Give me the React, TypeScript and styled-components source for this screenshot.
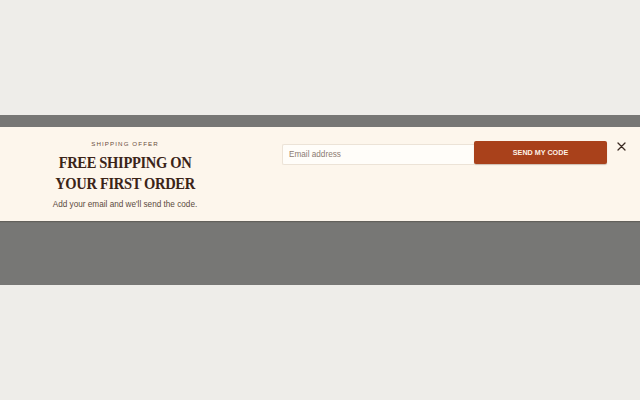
import React, { useState } from 'react'
import styled, { createGlobalStyle } from 'styled-components'

const GlobalStyle = createGlobalStyle`
    html, body {
        margin: 0;
        padding: 0;
        background: #eeede9;
    }
    * {
        box-sizing: border-box;
    }
`

const App = () => {
    const [email, setEmail] = useState('')

    return (
        <>
            <GlobalStyle />
            <Page>
                <Backdrop>
                    <Banner>
                        <Intro>
                            <Eyebrow>Shipping offer</Eyebrow>
                            <Heading>
                                Free shipping on
                                <br />
                                your first order
                            </Heading>
                            <Lead>Add your email and we'll send the code.</Lead>
                        </Intro>
                        <SignupForm onSubmit={(e) => e.preventDefault()}>
                            <EmailInput
                                type="email"
                                placeholder="Email address"
                                value={email}
                                onChange={(e) => setEmail(e.target.value)}
                            />
                            <SubmitButton type="submit">Send my code</SubmitButton>
                        </SignupForm>
                        <CloseButton aria-label="Close">
                            <svg width="9" height="9" viewBox="0 0 9 9">
                                <path
                                    d="M1 1L8 8M8 1L1 8"
                                    stroke="#3a2a22"
                                    strokeWidth="1.3"
                                    strokeLinecap="round"
                                />
                            </svg>
                        </CloseButton>
                    </Banner>
                </Backdrop>
            </Page>
        </>
    )
}

export default App

const Page = styled.div`
    width: 640px;
    height: 400px;
    padding-top: 115px;
    background: #eeede9;
`

const Backdrop = styled.div`
    height: 170px;
    padding-top: 12px;
    background: #777775;
`

const Banner = styled.div`
    display: flex;
    align-items: flex-start;
    height: 94px;
    background: #fdf6ec;
    box-shadow: 0 1px 1px rgba(40, 30, 20, 0.25);
`

const Intro = styled.div`
    width: 250px;
    padding-top: 13px;
    text-align: center;
`

const Eyebrow = styled.div`
    font-family: 'Liberation Sans', Arial, sans-serif;
    font-size: 6.2px;
    line-height: 8px;
    letter-spacing: 1.1px;
    text-transform: uppercase;
    color: #6a4c3c;
`

const Heading = styled.h2`
    margin: 4px 0 0;
    font-family: 'Liberation Serif', 'Times New Roman', serif;
    font-weight: 700;
    font-size: 17.5px;
    line-height: 21px;
    letter-spacing: -0.4px;
    text-transform: uppercase;
    color: #3b2418;
    transform: scaleX(0.83);
`

const Lead = styled.p`
    margin: 5px 0 0;
    font-family: 'Liberation Sans', Arial, sans-serif;
    font-size: 8.2px;
    line-height: 11px;
    color: #5b4a40;
`

const SignupForm = styled.form`
    display: flex;
    align-items: flex-start;
    width: 325px;
    margin: 0 0 0 32px;
    padding-top: 14px;
`

const EmailInput = styled.input`
    width: 192px;
    height: 21px;
    margin-top: 3px;
    padding: 0 6px;
    border: 1px solid #ece3d7;
    border-right: none;
    border-radius: 2px 0 0 2px;
    background: #fffdf9;
    font-family: 'Liberation Sans', Arial, sans-serif;
    font-size: 8.2px;
    color: #3b2418;
    outline: none;

    &::placeholder {
        color: #8c7b72;
    }
`

const SubmitButton = styled.button`
    width: 133px;
    height: 23px;
    padding: 0;
    border: none;
    border-radius: 2px;
    background: #a9411b;
    box-shadow: 0 1px 1px rgba(60, 20, 5, 0.25);
    font-family: 'Liberation Sans', Arial, sans-serif;
    font-weight: 700;
    font-size: 7.2px;
    text-transform: uppercase;
    color: #fdf1e6;
    cursor: pointer;
`

const CloseButton = styled.button`
    display: flex;
    width: 9px;
    height: 9px;
    margin: 15px 0 0 10px;
    padding: 0;
    border: none;
    background: transparent;
    cursor: pointer;
`
